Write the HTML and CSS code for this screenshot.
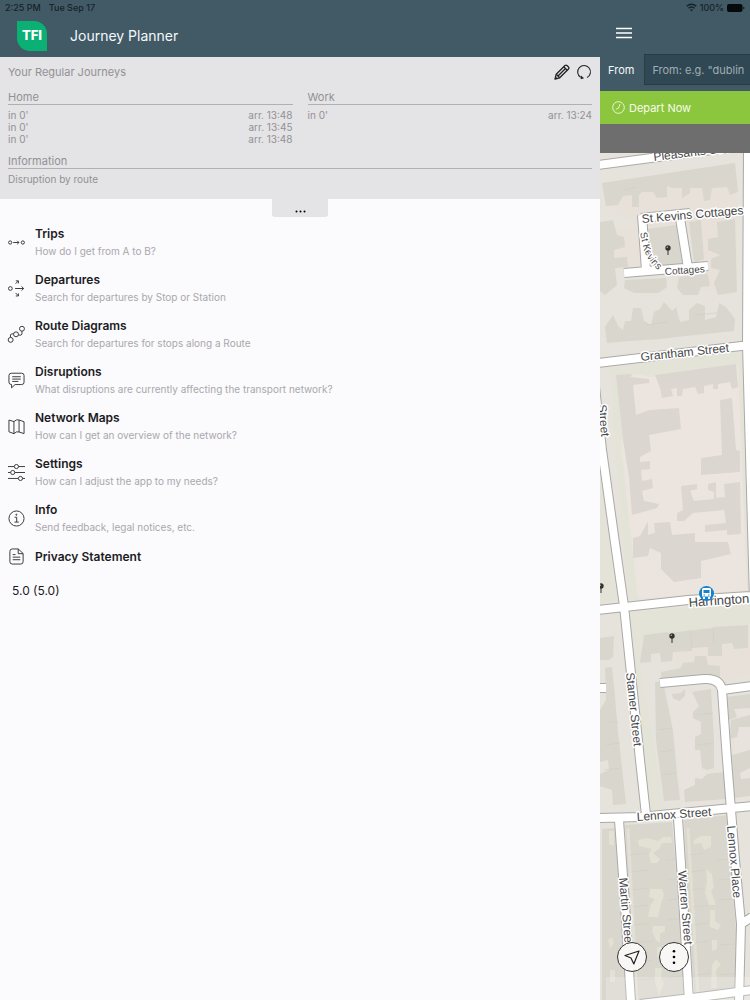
FILE: index.html
```html
<!DOCTYPE html>
<html lang="en">
<head>
<meta charset="utf-8">
<meta name="viewport" content="width=device-width, initial-scale=1">
<title>Journey Planner</title>
<link rel="stylesheet" href="styles.css">
</head>
<body>
<div class="app">
  <div class="status">
    <span>2:25 PM</span><span>Tue Sep 17</span>
    <span class="status-right">
      <svg width="11" height="9" viewBox="0 0 11 9" aria-hidden="true"><g fill="none" stroke="currentColor" stroke-width="1.5"><path d="M.7 3.3Q5.500-.9 10.300 3.300M2.500 5.300Q5.500 2.700 8.500 5.300"/></g><path d="M3.900 6.800Q5.500 5.500 7.100 6.800L5.500 8.600z" fill="currentColor"/></svg>
      <span>100%</span>
      <svg width="18" height="8" viewBox="0 0 18 8" aria-hidden="true"><rect width="15.500" height="8" rx="2" fill="#050a0d"/><path d="M16.300 2.700q1.200.3 1.200 1.300t-1.200 1.300z" fill="#050a0d"/></svg>
    </span>
  </div>

  <aside class="drawer">
    <header class="brand">
      <svg class="logo" width="30" height="30" viewBox="0 0 30 30" role="img" aria-label="TFI"><path d="M0 0h17A13 13 0 0 1 30 13v17H13A13 13 0 0 1 0 17z" fill="#0bb074"/><text x="15" y="19" text-anchor="middle" class="logo-text">TFI</text></svg>
      <h1>Journey Planner</h1>
    </header>

    <section class="regular">
      <div class="regular-head">
        <h2>Your Regular Journeys</h2>
        <button class="icon-btn" type="button" aria-label="Edit"><svg width="16" height="16" viewBox="0 0 16 16"><g fill="none" stroke="#222" stroke-width="1.300" stroke-linejoin="round"><path d="M1 15l1.200-4.700L11 1.500q1-.8 2 0l1.500 1.500q.8 1 0 2L5.700 13.800z"/><path d="M2.200 10.300l3.500 3.500M9.700 2.800l3.500 3.500M4 12l7.500-7.500"/></g><path d="M1 15l.6-2.500 1.900 1.900z" fill="#222"/></svg></button>
        <button class="icon-btn" type="button" aria-label="Refresh"><svg width="16" height="16" viewBox="0 0 16 16"><path d="M11 13.600A6.400 6.400 0 1 0 4.600 13.300" fill="none" stroke="#222" stroke-width="1.100"/><path d="M4.700 15.200l.2-3.700 3.200 2.700z" fill="#222"/></svg></button>
      </div>
      <div class="journeys">
        <div>
          <h3>Home</h3>
          <p class="trip"><span>in 0'</span><span>arr. 13:48</span></p>
          <p class="trip"><span>in 0'</span><span>arr. 13:45</span></p>
          <p class="trip"><span>in 0'</span><span>arr. 13:48</span></p>
        </div>
        <div>
          <h3>Work</h3>
          <p class="trip"><span>in 0'</span><span>arr. 13:24</span></p>
        </div>
      </div>
      <div class="information">
        <h3>Information</h3>
        <p class="trip">Disruption by route</p>
      </div>
    </section>
    <button class="handle" type="button" aria-label="Expand"><svg width="11" height="3" viewBox="0 0 11 3"><circle cx="1.500" cy="1.500" r="1"/><circle cx="5.500" cy="1.500" r="1"/><circle cx="9.500" cy="1.500" r="1"/></svg></button>

    <nav class="menu">
      <a href="#trips"><svg class="ico" viewBox="0 0 18 18"><circle cx="2.300" cy="9" r="1.700"/><circle cx="15.700" cy="9" r="1.700"/><path d="M5.500 9h6M9.800 7.200L11.600 9l-1.800 1.800"/></svg><span><b>Trips</b><small>How do I get from A to B?</small></span></a>
      <a href="#departures"><svg class="ico" viewBox="0 0 18 18"><circle cx="2.500" cy="9" r="2"/><path d="M7.500 9h9M14.300 6.800L16.600 9l-2.300 2.200M8 4l3-3M8.300.9H11v2.700M8 13.700l3 3M8.300 16.900H11v-2.700"/></svg><span><b>Departures</b><small>Search for departures by Stop or Station</small></span></a>
      <a href="#routes"><svg class="ico" viewBox="0 0 18 18"><circle cx="2.800" cy="14.700" r="2.600"/><circle cx="8.500" cy="8.800" r="2.600"/><circle cx="14.800" cy="2.900" r="2.600"/><path d="M2.600 12V9.500q0-1.300 3.300-1.300M11 9.500q3.500 1 3.800-1V5.500"/></svg><span><b>Route Diagrams</b><small>Search for departures for stops along a Route</small></span></a>
      <a href="#disruptions"><svg class="ico" viewBox="0 0 18 18"><path d="M3.500 1.300h11q2.500 0 2.500 2.500v7q0 2.500-2.500 2.500H7.500L3.800 16.800v-3.500Q1 13.300 1 10.800v-7q0-2.500 2.500-2.500zM4.500 5h9M4.500 7.500h9M4.500 10H11"/></svg><span><b>Disruptions</b><small>What disruptions are currently affecting the transport network?</small></span></a>
      <a href="#maps"><svg class="ico" viewBox="0 0 18 18"><path d="M1 2.200l5.300 1.600Q9 1 11.700 2.100L17 4v12.500l-5.300-1.700Q9 13.700 6.300 16.600L1 14.600zM6.300 3.800v12.800M11.700 2.100v12.700"/></svg><span><b>Network Maps</b><small>How can I get an overview of the network?</small></span></a>
      <a href="#settings"><svg class="ico" viewBox="0 0 18 18"><path d="M0 2.700h6.500M11.200 2.700H18M0 9h2.700M7.300 9H18M0 15.300h10.800M15.500 15.300H18"/><circle cx="8.900" cy="2.700" r="2.200"/><circle cx="5" cy="9" r="2.200"/><circle cx="13.200" cy="15.300" r="2.200"/></svg><span><b>Settings</b><small>How can I adjust the app to my needs?</small></span></a>
      <a href="#info"><svg class="ico" viewBox="0 0 18 18"><circle cx="9" cy="9" r="8"/><path d="M7 7.700h2.200v5M6.800 12.800h4.600"/><circle cx="8.900" cy="5" r=".6"/></svg><span><b>Info</b><small>Send feedback, legal notices, etc.</small></span></a>
      <a href="#privacy"><svg class="ico" viewBox="0 0 18 18"><path d="M4.500 1h6.300L16 5.800v8.700q0 2.500-2.500 2.500h-9Q2 17 2 14.500v-11Q2 1 4.500 1zM10.800 1v5H16M5 7h3M5 9.700h8M5 12.400h8"/></svg><span><b>Privacy Statement</b></span></a>
    </nav>
    <p class="version">5.0 (5.0)</p>
  </aside>

  <main class="planner">
    <div class="search">
      <button class="burger" type="button" aria-label="Menu"><svg width="16" height="12" viewBox="0 0 16 12"><path d="M0 1.500h16M0 6h16M0 10.500h16" stroke="#fff" stroke-width="1.700"/></svg></button>
      <div class="field"><label for="from">From</label><input id="from" type="text" placeholder="From: e.g. &quot;dublin"></div>
    </div>
    <button class="depart" type="button"><svg width="13" height="13" viewBox="0 0 13 13"><g fill="none" stroke="#e9f7cf"><circle cx="6.500" cy="6.500" r="5.800"/><path d="M8 3L6.500 7.200 3.800 8.300"/></g></svg>Depart Now</button>
    <div class="strip"></div>
    <div class="map">
      <svg class="map-art" viewBox="600 153 150 847" preserveAspectRatio="xMinYMin slice" role="img" aria-label="Street map">
        <defs>
          <g id="roads">
            <path d="M598 165L750 145M748 150L747 345L754 600M598 363L750 345M592 360L602 450L616 550L624 606L640 760L646 815M598 610L688 600L752 596M598 688H606M660 683L704 679Q720 678 722 690L727 760L731 810L735 860L741 924L739 1002M722 690L752 686M598 818L640 817L752 806M619 820L624 890L631 1002M678 818L682 880L689 1002M741 924L752 917M640 1004L700 997L752 990"/>
            <path d="M641 218L690 213M642 215L646 270M680 218L688 268M624 273L708 266"/>
          </g>
          <g id="pin"><path d="M0 0v7" stroke="#333" stroke-width="1"/><circle r="2.700" fill="#35352f"/><circle cx="-.7" cy="-.7" r=".8" fill="#aaa"/></g>
          <path id="bend" d="M640 233L644 250Q649 264 663 274"/>
        </defs>
        <rect x="600" y="153" width="150" height="847" fill="#e6e3dc"/>
        <path d="M600 460L616 600L600 604zM610 368L742 352L748 592L630 602L622 540zM628 612L750 602V632L640 640L642 680L665 810L650 812z" fill="#e4e3d8"/>
        <path d="M633 373L650 377L738 366L747 590L638 599L621 445z" fill="#ece5df"/>
        <path d="M602 183L735 163L738 220L640 228L606 205zM606 230L640 227L644 268H612zM692 222L737 215V290L696 290zM672 645L750 636V675L724 684L712 674L680 668z" fill="#e7e1d9"/>
        <path d="M668 695L695 692L712 806L684 810zM732 700L750 695V800L738 803z" fill="#e8e3dc"/>
        <g fill="#d9d6ce">
          <path d="M602 183L735 163L738 192L730 195L727 187L712 188L710 200L704 201L702 188H692L690 187V193L682 198V188H672L667 186V197L657 198L653 192H642L639 195V207H632V195L623 196L618 205L606 206z"/>
          <path d="M600 222L613 220L617 235L624 237L625 247L614 250V258L627 257L628 267L615 268L617 285L605 295L600 291z"/>
          <path d="M646 229L676 225L683 264L661 267L650 250zM689 222L701 220L704 259L694 263z"/>
          <path d="M717 222L735 219L737 292L718 295L714 283L720 270L711 268V259L720 255L708 250V239L718 237z"/>
          <path d="M625 280L666 278L667 287L658 293H634L624 288zM679 277L708 274L710 286L701 287L698 295H683L677 288z"/>
          <path d="M607 343L605 327L613 315L618 326L623 330L625 321H631L633 308H641L644 321L651 325L654 312L660 309L664 302L672 311L676 307L680 322L689 320V310L697 303L705 306V320L716 317L719 303L726 307L735 319L734 331L686 336L660 339L630 341z"/>
          <path d="M644 635L667 632L668 633L712 628L713 627L748 625V648L734 649L732 643L722 644V656H708V647L692 648V651L673 652L672 661L661 662L660 653L651 654V662L640 663z"/>
          <path d="M600 638L614 636L613 657L609 660H600zM605 668L612 667L615 697L618 732L626 804L613 805L612 790L600 786V774L609 770L608 760L600 762V710L606 700z"/>
          <path d="M655 682L663 681L673 731L677 775L680 800L664 801L656 740zM661 672L681 668L683 663L694 662L695 656H706L708 665L720 666V680L715 681L709 674L661 679zM672 694L681 693L685 689V696L679 701L673 698zM692 692L711 689L714 739V768L707 770L702 768L700 750H695V737L701 734V722L693 718V712L699 706zM684 790L695 785V778L702 779L707 774L724 772L727 799L685 802z"/>
          <path d="M726 697L750 694V708L734 709L737 717L729 720zM731 720L750 715V727H739L737 737L730 739zM732 755L750 750V768L740 773L741 779L750 778V796L734 798z"/>
          <path d="M602 829L615 828L620 905L626 1000H602z"/>
          <path d="M625 825L672 822L677 880L684 996L635 1000L629 900z"/>
          <path d="M684 820L728 815L731 870L736 930L735 990L694 995L687 880z"/>
        </g>
        <g fill="#e3e0d4">
          <path d="M638 840L647 838L658 841L663 837H671L672 843H662L659 849L653 853L660 859L657 863H651L649 854L652 849L639 846zM650 889H662L664 895L661 904L658 917H648L650 906L655 899L649 897zM653 926H665V931L660 934V943L656 940L652 932zM657 947H662V955L657 957zM655 968H662L661 978L664 983L659 996L655 982z"/>
          <path d="M701 836H711V847L704 850L701 843L694 844V840zM706 869L712 874L714 887L711 891L716 905H709L705 893L707 881zM710 910H715V921L721 925L718 930L710 927zM712 940H717V949L712 951zM712 965L716 959L721 965L716 970L717 988H711z"/>
          <path d="M609 831H614V846L609 844zM608 940L612 937L614 943L610 949zM610 970H615V982H610z"/>
        </g>
        <path d="M628 828L637 1000M688 828L698 996" stroke="#e2e0d4" stroke-width="3"/>
        <g fill="#dcd6d0">
          <path d="M616 375L632 374L630 377L649 379V383L633 385L636 415L649 410L679 408L681 429L649 435L651 451L640 457V462L650 461V469L641 470L642 481L652 479L653 488L642 491L644 501L659 504L657 508L632 515L629 477L623 440z"/>
          <path d="M655 375L736 364L738 387L732 389L730 382L718 384V389H713V384L704 386V393L698 394L695 387L683 389L682 396H677V388L671 389L673 396L662 398L660 388z"/>
          <path d="M720 400L732 398L736 450L740 451V472L701 475V458L722 455z"/>
          <path d="M681 486L697 484V489L690 491L694 501L714 499V492L708 490V484L716 482V498L725 497L724 484L740 482L741 534L727 535V530L705 532V525L726 523L724 510L693 513L684 521H677V513L683 510z"/>
          <path d="M633 538L640 536L647 523L648 522V535L655 533L654 523L670 522L672 535L695 533V542L728 542L731 554L701 561V578L674 582L661 569V553L650 548L648 556L633 558z"/>
        </g>
        <path d="M609 722h9M606 745l14-2M604 770l17-2M658 730l14-2M660 752l14-2M662 775l15-2M697 715l16-2M698 745l15-2M630 855l16-2M631 872l18-2M632 890l16-2M633 907l15-2M634 925l16-2M635 943l18-2M636 962l16-2M637 980l17-2M666 860l10-1M667 880l10-1M667 900l12-1M667 920l12-1M667 978l14-2M690 855l14-2M691 872l14-2M692 890l12-2M693 907l15-2M694 925l14-2M695 943l14-2M697 975l13-2M717 860l13-1M718 880l13-1M719 900l13-1M720 945l14-1M720 975l14-1M622 190l16-3M647 325l20-3M695 315l22-2M668 633l7 10M690 630l2 18M713 628l1 16" fill="none" stroke="#cfccc4" stroke-width=".6"/>
        <use href="#roads" class="road-edge"/>
        <use href="#roads" class="road-fill"/>
        <g class="street">
          <text x="654" y="161" transform="rotate(-7 654 161)">Pleasants Street</text>
          <text x="642" y="223" transform="rotate(-5 642 223)">St Kevins Cottages</text>
          <text class="street-small"><textPath href="#bend">St Kevins</textPath></text>
          <text class="street-small" x="665" y="275" transform="rotate(-4 665 275)">Cottages</text>
          <text x="641" y="361" transform="rotate(-6 641 361)">Grantham Street</text>
          <text x="598" y="405" transform="rotate(84 598 405)">Street</text>
          <text class="street-big" x="689" y="607" transform="rotate(-4 689 607)">Harrington</text>
          <text x="626" y="673" transform="rotate(84 626 673)">Stamer Street</text>
          <text x="637" y="821" transform="rotate(-4 637 821)">Lennox Street</text>
          <text x="727" y="826" transform="rotate(85 727 826)">Lennox Place</text>
          <text x="619" y="878" transform="rotate(85 619 878)">Martin Street</text>
          <text x="678" y="871" transform="rotate(85 678 871)">Warren Street</text>
        </g>
        <use href="#pin" x="668" y="248"/><use href="#pin" x="672" y="636"/><use href="#pin" x="601" y="586"/>
        <circle cx="706.500" cy="593.500" r="7.500" fill="#1583c9"/>
        <path d="M703.500 588h6q1.500 0 1.500 1.500v7h-9v-7q0-1.500 1.500-1.500zM703 597h2v2h-2zM708 597h2v2h-2z" fill="#fff"/><path d="M703.500 590h6v3h-6zM703.500 594.500h1.500v1h-1.500zM708 594.500h1.500v1H708z" fill="#1583c9"/>
        <rect x="606" y="977" width="144" height="23" fill="#fff" opacity=".2"/>
      </svg>
      <div class="map-tools">
        <button type="button" aria-label="Locate me"><svg width="18" height="18" viewBox="0 0 18 18"><path d="M16 3L2 7.500l6 2.500 2.800 6z" fill="none" stroke="#222" stroke-width="1.200" stroke-linejoin="round"/></svg></button>
        <button type="button" aria-label="More options"><svg width="4" height="16" viewBox="0 0 4 16"><circle cx="2" cy="2.200" r="1.300"/><circle cx="2" cy="8" r="1.300"/><circle cx="2" cy="13.800" r="1.300"/></svg></button>
      </div>
    </div>
  </main>
</div>
</body>
</html>
```
FILE: styles.css
```css
* { box-sizing: border-box; }
body { margin: 0; font-family: Inter, "Liberation Sans", sans-serif; background: #fbfafd; color: #1c1c1e; }
h1, h2, h3, p { margin: 0; font-weight: 400; }
button { border: 0; padding: 0; margin: 0; background: none; font: inherit; color: inherit; }
svg { display: block; flex: none; }

.app { display: grid; grid-template-columns: 4fr 1fr; grid-template-rows: auto 1fr; min-height: 100vh; }
.status { grid-column: 1 / -1; display: flex; align-items: center; gap: 8px; height: 15px; padding: 0 5px; background: #425a66; color: #15232b; font-size: 9px; font-weight: 500; }
.status-right { display: flex; align-items: center; gap: 3px; margin-left: auto; }

.drawer { min-width: 0; }
.brand { display: flex; align-items: center; gap: 23px; height: 42px; padding: 0 17px; background: #425a66; color: #f3f8fb; }
.brand h1 { font-size: 14px; line-height: 20px; }
.logo-text { font-family: Inter, sans-serif; font-size: 13px; font-weight: 800; fill: #fff; }

.regular { height: 142px; padding: 6px 8px; background: #e4e3e5; color: #929196; }
.regular-head { display: flex; align-items: center; gap: 6px; height: 18px; }
.regular-head h2 { flex: 1; font-size: 11px; line-height: 18px; }
.icon-btn { width: 16px; height: 16px; }
.journeys { display: grid; grid-template-columns: 1fr 1fr; gap: 15px; padding-top: 9px; }
.regular h3 { margin-bottom: 4px; border-bottom: 1px solid #b0afb3; font-size: 11px; line-height: 14px; }
.trip { display: flex; justify-content: space-between; font-size: 10px; line-height: 12px; }
.information { padding-top: 9px; }
.handle { display: flex; align-items: center; justify-content: center; width: 56px; height: 18px; margin: 0 auto; padding-top: 6px; background: #e4e3e5; border-radius: 0 0 3px 3px; }

.menu { display: flex; flex-direction: column; gap: 14px; padding: 9px 8px 0; }
.menu a { display: flex; align-items: center; gap: 10px; color: inherit; text-decoration: none; }
.ico { width: 17px; height: 17px; fill: none; stroke: #333; stroke-width: 1; overflow: visible; }
.menu b { display: block; font-size: 12px; font-weight: 600; line-height: 16px; }
.menu small { display: block; padding-top: 2px; color: #a9a8ad; font-size: 10px; line-height: 14px; }
.version { padding: 18px 12px; font-size: 12px; line-height: 16px; }

.planner { display: flex; flex-direction: column; min-width: 0; overflow: hidden; }
.search { height: 76px; background: #425a66; }
.burger { display: block; margin: 12px 0 15px 16px; }
.field { display: flex; align-items: center; gap: 10px; padding-left: 8px; color: #f3f8fb; font-size: 11px; }
.field input { flex: 1; min-width: 0; height: 31px; padding: 0 0 0 7px; border: 1px solid #263c47; border-right: 0; border-radius: 0; background: #2f4853; color: #fff; font: inherit; }
.field input::placeholder { color: #a0adb4; opacity: 1; }
.depart { display: flex; align-items: center; gap: 4px; height: 33px; padding-left: 12px; background: #8cc63f; color: #f7fceb; font-size: 11px; }
.strip { height: 29px; background: #6e6e6e; }

.map { position: relative; flex: 1; min-height: 300px; overflow: hidden; }
.map-art { position: absolute; inset: 0; width: 100%; height: 100%; }
.road-edge { fill: none; stroke: #aaa9a6; stroke-width: 10px; }
.road-fill { fill: none; stroke: #fff; stroke-width: 8px; }
.street { font-family: "Liberation Sans", Arial, sans-serif; font-size: 12px; fill: #48484a; stroke: #fff; stroke-width: 3px; stroke-linejoin: round; paint-order: stroke; }
.street-big { font-size: 13px; }
.street-small { font-size: 10px; }
.map-tools { position: absolute; left: 17px; bottom: 28px; display: flex; gap: 12px; }
.map-tools button { display: flex; align-items: center; justify-content: center; width: 30px; height: 30px; border: 1px solid #333; border-radius: 50%; background: #f8f7f6; }
```
